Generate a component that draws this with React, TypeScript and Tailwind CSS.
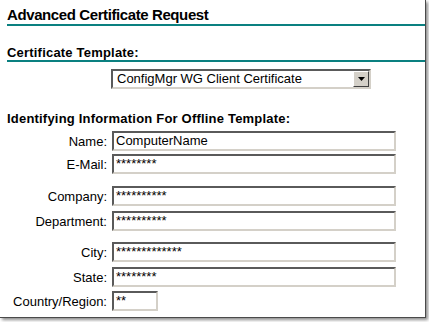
import React from 'react';

const rows = [
  { label: 'Name:', value: 'ComputerName', mt: 'mt-[5px]', w: 'w-[284px]' },
  { label: 'E-Mail:', value: '********', mt: 'mt-[3px]', w: 'w-[284px]' },
  { label: 'Company:', value: '**********', mt: 'mt-[12px]', w: 'w-[284px]' },
  { label: 'Department:', value: '**********', mt: 'mt-[5px]', w: 'w-[284px]' },
  { label: 'City:', value: '*************', mt: 'mt-[11px]', w: 'w-[284px]' },
  { label: 'State:', value: '********', mt: 'mt-[5px]', w: 'w-[284px]' },
  { label: 'Country/Region:', value: '**', mt: 'mt-[4px]', w: 'w-[46px]' },
];

const App: React.FC = () => {
  return (
    <div className="w-[429px] h-[322px] bg-white overflow-hidden font-['Liberation_Sans',Arial,sans-serif] text-black">
      <div className="w-[426px] h-[318px] bg-white border-r border-b border-[#4a4a4a] shadow-[2px_2px_3px_rgba(0,0,0,0.45)] pl-[7px] pt-[6px]">
        <h1 className="text-[15px] leading-[18px] tracking-[-0.4px] font-bold border-b-2 border-[#0a8080]">
          Advanced Certificate Request
        </h1>

        <h2 className="mt-[19px] text-[13px] leading-[15px] tracking-[0.2px] font-bold border-b-2 border-[#0a8080]">
          Certificate Template:
        </h2>

        <div className="mt-[7px] ml-[104px] w-[260px] h-[20px] flex border-2 border-t-[#5a5a5a] border-l-[#5a5a5a] border-b-[#d4d0c8] border-r-[#d4d0c8] bg-white">
          <div className="flex-1 text-[13px] leading-[16px] pl-[4px]">ConfigMgr WG Client Certificate</div>
          <div className="w-[16px] h-[16px] bg-[#d4d0c8] border border-t-white border-l-white border-b-[#404040] border-r-[#404040] flex items-center justify-center">
            <svg width="7" height="4" viewBox="0 0 7 4">
              <path d="M0 0H7L3.5 4Z" fill="#000" />
            </svg>
          </div>
        </div>

        <h2 className="mt-[22px] text-[13px] leading-[15px] tracking-[0.2px] font-bold">
          Identifying Information For Offline Template:
        </h2>

        <div className="flex flex-col">
          {rows.map((r) => (
            <div key={r.label} className={`flex items-center h-[20px] ${r.mt}`}>
              <div className="w-[100px] text-right text-[13px] leading-[15px]">{r.label}</div>
              <div
                className={`ml-[5px] ${r.w} h-[20px] border-2 border-t-[#5a5a5a] border-l-[#5a5a5a] border-b-[#d4d0c8] border-r-[#d4d0c8] bg-white text-[13px] leading-[16px] pl-[2px] overflow-hidden whitespace-nowrap`}
              >
                {r.value}
              </div>
            </div>
          ))}
        </div>
      </div>
    </div>
  );
};

export default App;
